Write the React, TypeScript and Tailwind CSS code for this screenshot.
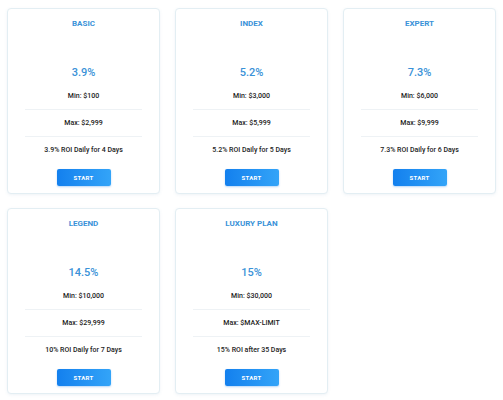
import React from 'react';

interface Plan {
  name: string;
  rate: string;
  min: string;
  max: string;
  roi: string;
}

const plans: Plan[] = [
  { name: 'BASIC', rate: '3.9%', min: 'Min: $100', max: 'Max: $2,999', roi: '3.9% ROI Daily for 4 Days' },
  { name: 'INDEX', rate: '5.2%', min: 'Min: $3,000', max: 'Max: $5,999', roi: '5.2% ROI Daily for 5 Days' },
  { name: 'EXPERT', rate: '7.3%', min: 'Min: $6,000', max: 'Max: $9,999', roi: '7.3% ROI Daily for 6 Days' },
  { name: 'LEGEND', rate: '14.5%', min: 'Min: $10,000', max: 'Max: $29,999', roi: '10% ROI Daily for 7 Days' },
  { name: 'LUXURY PLAN', rate: '15%', min: 'Min: $30,000', max: 'Max: $MAX-LIMIT', roi: '15% ROI after 35 Days' },
];

const PlanCard: React.FC<{ plan: Plan }> = ({ plan }) => (
  <div className="flex h-[186px] flex-col items-center rounded-[4px] border border-[#e3eef3] bg-white px-[17px] pt-[10px] pb-[7px] shadow-[0_1px_3px_rgba(120,160,190,0.12)]">
    <div className="text-[8px] font-bold leading-[10px] text-[#3a92d8]">{plan.name}</div>
    <div className="mt-[37px] text-[11px] font-medium leading-[14px] text-[#3a92d8]">{plan.rate}</div>
    <div className="mt-[4px] w-full">
      <div className="flex h-[26px] items-center justify-center border-b border-[#eef2f5] text-[7px] font-medium text-[#222]">
        {plan.min}
      </div>
      <div className="flex h-[27px] items-center justify-center border-b border-[#eef2f5] text-[7px] font-medium text-[#222]">
        {plan.max}
      </div>
      <div className="flex h-[26px] items-center justify-center text-[7px] font-medium text-[#222]">
        {plan.roi}
      </div>
    </div>
    <button className="mt-[6px] flex h-[18px] w-[54px] items-center justify-center rounded-[2px] bg-gradient-to-r from-[#1380ee] to-[#33a4f8] text-[6px] font-bold tracking-[0.3px] text-white shadow-[0_1px_2px_rgba(20,120,230,0.3)]">
      START
    </button>
  </div>
);

export default function App() {
  return (
    <div className="min-h-[400px] w-[503px] bg-white pt-[8px] pl-[7px]" style={{ fontFamily: 'Roboto, "Liberation Sans", sans-serif' }}>
      <div className="grid w-[489px] grid-cols-[153px_153px_153px] gap-x-[15px] gap-y-[14px]">
        {plans.map((p) => (
          <PlanCard key={p.name} plan={p} />
        ))}
      </div>
    </div>
  );
}
